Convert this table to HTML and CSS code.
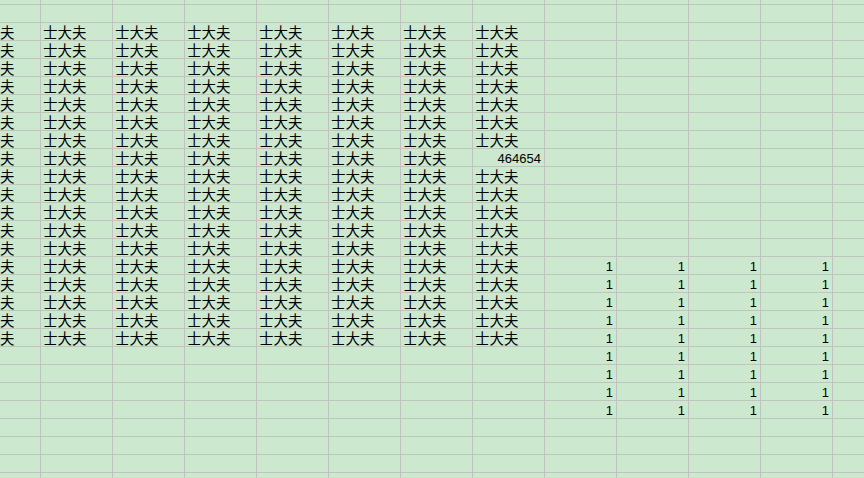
FILE: index.html
```html
<!DOCTYPE html>
<html lang="zh">
<head>
<meta charset="utf-8">
<title>Sheet</title>
<link rel="stylesheet" href="styles.css">
</head>
<body>
<div class="sheet">
  <div class="row"><div class="t">士大夫</div><div class="t">士大夫</div><div class="t">士大夫</div><div class="t">士大夫</div><div class="t">士大夫</div><div class="t">士大夫</div><div class="t">士大夫</div><div class="t">士大夫</div></div>
  <div class="row"><div class="t">士大夫</div><div class="t">士大夫</div><div class="t">士大夫</div><div class="t">士大夫</div><div class="t">士大夫</div><div class="t">士大夫</div><div class="t">士大夫</div><div class="t">士大夫</div></div>
  <div class="row"><div class="t">士大夫</div><div class="t">士大夫</div><div class="t">士大夫</div><div class="t">士大夫</div><div class="t">士大夫</div><div class="t">士大夫</div><div class="t">士大夫</div><div class="t">士大夫</div></div>
  <div class="row"><div class="t">士大夫</div><div class="t">士大夫</div><div class="t">士大夫</div><div class="t">士大夫</div><div class="t">士大夫</div><div class="t">士大夫</div><div class="t">士大夫</div><div class="t">士大夫</div></div>
  <div class="row"><div class="t">士大夫</div><div class="t">士大夫</div><div class="t">士大夫</div><div class="t">士大夫</div><div class="t">士大夫</div><div class="t">士大夫</div><div class="t">士大夫</div><div class="t">士大夫</div></div>
  <div class="row"><div class="t">士大夫</div><div class="t">士大夫</div><div class="t">士大夫</div><div class="t">士大夫</div><div class="t">士大夫</div><div class="t">士大夫</div><div class="t">士大夫</div><div class="t">士大夫</div></div>
  <div class="row"><div class="t">士大夫</div><div class="t">士大夫</div><div class="t">士大夫</div><div class="t">士大夫</div><div class="t">士大夫</div><div class="t">士大夫</div><div class="t">士大夫</div><div class="t">士大夫</div></div>
  <div class="row"><div class="t">士大夫</div><div class="t">士大夫</div><div class="t">士大夫</div><div class="t">士大夫</div><div class="t">士大夫</div><div class="t">士大夫</div><div class="t">士大夫</div><div class="n">464654</div></div>
  <div class="row"><div class="t">士大夫</div><div class="t">士大夫</div><div class="t">士大夫</div><div class="t">士大夫</div><div class="t">士大夫</div><div class="t">士大夫</div><div class="t">士大夫</div><div class="t">士大夫</div></div>
  <div class="row"><div class="t">士大夫</div><div class="t">士大夫</div><div class="t">士大夫</div><div class="t">士大夫</div><div class="t">士大夫</div><div class="t">士大夫</div><div class="t">士大夫</div><div class="t">士大夫</div></div>
  <div class="row"><div class="t">士大夫</div><div class="t">士大夫</div><div class="t">士大夫</div><div class="t">士大夫</div><div class="t">士大夫</div><div class="t">士大夫</div><div class="t">士大夫</div><div class="t">士大夫</div></div>
  <div class="row"><div class="t">士大夫</div><div class="t">士大夫</div><div class="t">士大夫</div><div class="t">士大夫</div><div class="t">士大夫</div><div class="t">士大夫</div><div class="t">士大夫</div><div class="t">士大夫</div></div>
  <div class="row"><div class="t">士大夫</div><div class="t">士大夫</div><div class="t">士大夫</div><div class="t">士大夫</div><div class="t">士大夫</div><div class="t">士大夫</div><div class="t">士大夫</div><div class="t">士大夫</div></div>
  <div class="row"><div class="t">士大夫</div><div class="t">士大夫</div><div class="t">士大夫</div><div class="t">士大夫</div><div class="t">士大夫</div><div class="t">士大夫</div><div class="t">士大夫</div><div class="t">士大夫</div><div class="n">1</div><div class="n">1</div><div class="n">1</div><div class="n">1</div></div>
  <div class="row"><div class="t">士大夫</div><div class="t">士大夫</div><div class="t">士大夫</div><div class="t">士大夫</div><div class="t">士大夫</div><div class="t">士大夫</div><div class="t">士大夫</div><div class="t">士大夫</div><div class="n">1</div><div class="n">1</div><div class="n">1</div><div class="n">1</div></div>
  <div class="row"><div class="t">士大夫</div><div class="t">士大夫</div><div class="t">士大夫</div><div class="t">士大夫</div><div class="t">士大夫</div><div class="t">士大夫</div><div class="t">士大夫</div><div class="t">士大夫</div><div class="n">1</div><div class="n">1</div><div class="n">1</div><div class="n">1</div></div>
  <div class="row"><div class="t">士大夫</div><div class="t">士大夫</div><div class="t">士大夫</div><div class="t">士大夫</div><div class="t">士大夫</div><div class="t">士大夫</div><div class="t">士大夫</div><div class="t">士大夫</div><div class="n">1</div><div class="n">1</div><div class="n">1</div><div class="n">1</div></div>
  <div class="row"><div class="t">士大夫</div><div class="t">士大夫</div><div class="t">士大夫</div><div class="t">士大夫</div><div class="t">士大夫</div><div class="t">士大夫</div><div class="t">士大夫</div><div class="t">士大夫</div><div class="n">1</div><div class="n">1</div><div class="n">1</div><div class="n">1</div></div>
  <div class="row"><div class="n col9">1</div><div class="n">1</div><div class="n">1</div><div class="n">1</div></div>
  <div class="row"><div class="n col9">1</div><div class="n">1</div><div class="n">1</div><div class="n">1</div></div>
  <div class="row"><div class="n col9">1</div><div class="n">1</div><div class="n">1</div><div class="n">1</div></div>
  <div class="row"><div class="n col9">1</div><div class="n">1</div><div class="n">1</div><div class="n">1</div></div>
</div>
</body>
</html>
```
FILE: styles.css
```css
html, body {
  margin: 0;
  padding: 0;
  width: 864px;
  height: 478px;
  overflow: hidden;
}

body {
  background-color: #cce8cf;
  background-image:
    linear-gradient(to right, #bfc4bf 1px, transparent 1px),
    linear-gradient(to bottom, #bfc4bf 1px, transparent 1px);
  background-size: 72px 18px;
  background-position: 40px 4px;
  color: #000;
}

.sheet {
  display: flex;
  flex-direction: column;
  margin-left: -32px;
  padding-top: 22px;
}

.row {
  display: grid;
  grid-template-columns: repeat(12, 72px);
  height: 18px;
}

.t {
  padding-left: 3px;
  padding-top: 1px;
  font-family: "Noto Sans CJK SC", "Noto Sans CJK JP", sans-serif;
  font-size: 14.5px;
  line-height: 17px;
  height: 18px;
  box-sizing: border-box;
  white-space: nowrap;
}

.n {
  text-align: right;
  padding-right: 3px;
  padding-top: 3px;
  font-family: "Liberation Sans", Arial, sans-serif;
  font-size: 13px;
  line-height: 15px;
  height: 18px;
  box-sizing: border-box;
  white-space: nowrap;
}

.col9 {
  grid-column-start: 9;
}
```
